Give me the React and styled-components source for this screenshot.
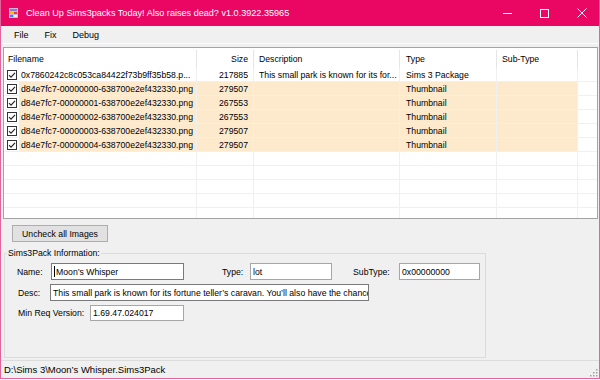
import styled, { createGlobalStyle } from "styled-components";

const GlobalStyle = createGlobalStyle`
  html, body {
    margin: 0;
    padding: 0;
    background: #ffffff;
  }
`;

const Window = styled.div`
  width: 600px;
  height: 379px;
  box-sizing: border-box;
  border: 1px solid #e3639c;
  border-top: none;
  background: #f0f0f0;
  display: flex;
  flex-direction: column;
  font-family: "Liberation Sans", Arial, sans-serif;
  color: #000;
  overflow: hidden;
`;

const TitleBar = styled.div`
  height: 26px;
  margin: 0 -1px;
  background: #ea0663;
  color: #fff;
  display: flex;
  align-items: center;
  padding-left: 9px;
  font-size: 9.1px;
`;

const Title = styled.span`
  margin-left: 8px;
  white-space: nowrap;
`;

const Controls = styled.div`
  margin-left: auto;
  display: flex;
  height: 100%;
`;

const ControlButton = styled.div`
  width: 37px;
  height: 100%;
  display: flex;
  align-items: center;
  justify-content: center;
`;

const MenuBar = styled.div`
  height: 17px;
  display: flex;
  align-items: center;
  padding-left: 5px;
  font-size: 9px;
  border-bottom: 1px solid #fbfbfb;
  margin-bottom: 3px;
`;

const MenuItem = styled.span`
  padding: 0 8px;
`;

const ListView = styled.div`
  margin: 0 1px 0 2px;
  height: 172px;
  box-sizing: border-box;
  border: 1px solid #a3a3a3;
  background: #fff;
  overflow: hidden;
  font-size: 8.7px;
`;

const HeaderRow = styled.div`
  display: flex;
  height: 20px;
`;

const HeaderCell = styled.div`
  width: ${(p) => p.$w}px;
  flex: none;
  box-sizing: border-box;
  border-right: 1px solid #e5e5e5;
  margin: 2px 0 0;
  display: flex;
  align-items: center;
  justify-content: ${(p) => (p.$right ? "flex-end" : "flex-start")};
  padding: 0 ${(p) => (p.$right ? 5 : 0)}px 1px ${(p) => p.$pl ?? 5}px;
`;

const Row = styled.div`
  display: flex;
  height: 14px;
  box-sizing: border-box;
  border-bottom: 1px solid #f0f0f0;
`;

const Cell = styled.div`
  width: ${(p) => p.$w}px;
  flex: none;
  box-sizing: border-box;
  border-right: 1px solid #f0f0f0;
  background: ${(p) => (p.$hl ? "#fdeacd" : "transparent")};
  display: flex;
  align-items: center;
  justify-content: ${(p) => (p.$right ? "flex-end" : "flex-start")};
  padding: 0 ${(p) => (p.$right ? 5 : 0)}px 0 ${(p) => p.$pl ?? 5}px;
  white-space: nowrap;
  overflow: hidden;
`;

const NameText = styled.span`
  flex: 1;
  align-self: stretch;
  display: flex;
  align-items: center;
  margin-left: 2px;
  padding-left: 2px;
  background: ${(p) => (p.$hl ? "#fdeacd" : "transparent")};
  overflow: hidden;
  white-space: nowrap;
`;

const Filler = styled.div`
  flex: 1;
`;

const Body = styled.div`
  flex: 1;
  display: flex;
  flex-direction: column;
  align-items: flex-start;
`;

const Button = styled.button`
  margin: 6px 0 0 11px;
  width: 96px;
  height: 17px;
  padding: 0;
  font-family: "Liberation Sans", Arial, sans-serif;
  font-size: 8.7px;
  color: #000;
  background: #e1e1e1;
  border: 1px solid #adadad;
`;

const GroupBox = styled.fieldset`
  margin: 5px 0 0 3px;
  width: 482px;
  box-sizing: border-box;
  padding: 0 0 36px;
  border: 1px solid #dcdcdc;
  min-width: 0;
`;

const Legend = styled.legend`
  font-size: 8.7px;
  line-height: 12px;
  padding: 0 1px;
  margin-left: 2px;
`;

const FormRow = styled.div`
  display: flex;
  align-items: center;
  margin-top: 4px;
  padding-left: 12px;
  font-size: 8.7px;
`;

const Label = styled.span`
  width: ${(p) => p.$w}px;
  margin-left: ${(p) => p.$ml ?? 0}px;
  flex: none;
  white-space: nowrap;
`;

const TextBox = styled.div`
  width: ${(p) => p.$w}px;
  height: ${(p) => p.$h ?? 17}px;
  flex: none;
  box-sizing: border-box;
  border: 1px solid ${(p) => (p.$focus ? "#2a8ee6" : p.$dark ? "#7a7a7a" : "#a6a6a6")};
  background: #fff;
  display: flex;
  align-items: center;
  padding: 0 2px;
  overflow: hidden;
  white-space: nowrap;
`;

const Caret = styled.span`
  width: 1px;
  height: 11px;
  background: #000;
  margin-right: 1px;
  flex: none;
`;

const StatusBar = styled.div`
  height: 18px;
  box-sizing: border-box;
  border-top: 1px solid #dcdcdc;
  display: flex;
  align-items: center;
  padding-left: 3px;
  font-size: 9.5px;
`;

const Grip = styled.svg`
  margin-left: auto;
  margin-right: 1px;
  align-self: flex-end;
  margin-bottom: 1px;
`;

const COLS = [193, 57, 146, 97, 81];

const rows = [
  {
    name: "0x7860242c8c053ca84422f73b9ff35b58.p...",
    size: "217885",
    desc: "This small park is known for its for...",
    type: "Sims 3 Package",
    hl: false,
  },
  { name: "d84e7fc7-00000000-638700e2ef432330.png", size: "279507", type: "Thumbnail", hl: true },
  { name: "d84e7fc7-00000001-638700e2ef432330.png", size: "267553", type: "Thumbnail", hl: true },
  { name: "d84e7fc7-00000002-638700e2ef432330.png", size: "267553", type: "Thumbnail", hl: true },
  { name: "d84e7fc7-00000003-638700e2ef432330.png", size: "279507", type: "Thumbnail", hl: true },
  { name: "d84e7fc7-00000004-638700e2ef432330.png", size: "279507", type: "Thumbnail", hl: true },
];

function AppIcon() {
  return (
    <svg width="9" height="10" viewBox="0 0 9 10">
      <rect x="0" y="0" width="9" height="10" fill="#c9b6e4" />
      <rect x="1" y="1" width="7" height="2" fill="#8f7bc0" />
      <rect x="1" y="4" width="3" height="2" fill="#f2c20f" />
      <rect x="5" y="4" width="3" height="2" fill="#e23b3b" />
      <rect x="1" y="7" width="3" height="2" fill="#2f8ae8" />
      <rect x="5" y="7" width="3" height="2" fill="#f4efe2" />
    </svg>
  );
}

function CheckBox() {
  return (
    <svg width="10" height="10" viewBox="0 0 10 10" style={{ flex: "none" }}>
      <rect x="0.5" y="0.5" width="9" height="9" fill="#fff" stroke="#333" />
      <path d="M2 5.2 L4 7.2 L8 2.8" fill="none" stroke="#222" strokeWidth="1.1" />
    </svg>
  );
}

function ListRow({ r }) {
  return (
    <Row>
      <Cell $w={COLS[0]} $pl={3}>
        <CheckBox />
        <NameText $hl={r.hl}>{r.name}</NameText>
      </Cell>
      <Cell $w={COLS[1]} $hl={r.hl} $right>
        {r.size}
      </Cell>
      <Cell $w={COLS[2]} $hl={r.hl}>
        {r.desc}
      </Cell>
      <Cell $w={COLS[3]} $hl={r.hl} $pl={6}>
        {r.type}
      </Cell>
      <Cell $w={COLS[4]} $hl={r.hl} />
      <Filler />
    </Row>
  );
}

function EmptyRow() {
  return (
    <Row>
      {COLS.map((w, i) => (
        <Cell key={i} $w={w} />
      ))}
      <Filler />
    </Row>
  );
}

export default function App() {
  return (
    <>
      <GlobalStyle />
      <Window>
        <TitleBar>
          <AppIcon />
          <Title>Clean Up Sims3packs Today! Also raises dead? v1.0.3922.35965</Title>
          <Controls>
            <ControlButton>
              <svg width="9" height="9" viewBox="0 0 9 9">
                <line x1="0" y1="4.5" x2="9" y2="4.5" stroke="#fff" />
              </svg>
            </ControlButton>
            <ControlButton>
              <svg width="9" height="9" viewBox="0 0 9 9">
                <rect x="0.5" y="0.5" width="8" height="8" fill="none" stroke="#fff" />
              </svg>
            </ControlButton>
            <ControlButton>
              <svg width="10" height="10" viewBox="0 0 10 10">
                <path d="M0.5 0.5 L9.5 9.5 M9.5 0.5 L0.5 9.5" stroke="#fff" strokeWidth="1" />
              </svg>
            </ControlButton>
          </Controls>
        </TitleBar>
        <MenuBar>
          <MenuItem>File</MenuItem>
          <MenuItem>Fix</MenuItem>
          <MenuItem>Debug</MenuItem>
        </MenuBar>
        <ListView>
          <HeaderRow>
            <HeaderCell $w={COLS[0]} $pl={4}>Filename</HeaderCell>
            <HeaderCell $w={COLS[1]} $right>Size</HeaderCell>
            <HeaderCell $w={COLS[2]}>Description</HeaderCell>
            <HeaderCell $w={COLS[3]} $pl={6}>Type</HeaderCell>
            <HeaderCell $w={COLS[4]}>Sub-Type</HeaderCell>
            <Filler />
          </HeaderRow>
          {rows.map((r, i) => (
            <ListRow key={i} r={r} />
          ))}
          {[0, 1, 2, 3, 4].map((i) => (
            <EmptyRow key={i} />
          ))}
        </ListView>
        <Body>
          <Button>Uncheck all Images</Button>
          <GroupBox>
            <Legend>Sims3Pack Information:</Legend>
            <FormRow>
              <Label $w={34}>Name:</Label>
              <TextBox $w={133} $focus>
                <Caret />
                Moon’s Whisper
              </TextBox>
              <Label $w={28} $ml={38}>Type:</Label>
              <TextBox $w={82}>lot</TextBox>
              <Label $w={46} $ml={21}>SubType:</Label>
              <TextBox $w={81}>0x00000000</TextBox>
            </FormRow>
            <FormRow>
              <Label $w={32} $ml={1}>Desc:</Label>
              <TextBox $w={319} $dark>
                This small park is known for its fortune teller’s caravan. You’ll also have the chance
              </TextBox>
            </FormRow>
            <FormRow>
              <Label $w={72} $ml={1}>Min Req Version:</Label>
              <TextBox $w={94} $h={16}>1.69.47.024017</TextBox>
            </FormRow>
          </GroupBox>
        </Body>
        <StatusBar>
          D:\Sims 3\Moon’s Whisper.Sims3Pack
          <Grip width="10" height="10" viewBox="0 0 10 10">
            {[
              [8, 2],
              [5, 5],
              [8, 5],
              [2, 8],
              [5, 8],
              [8, 8],
            ].map(([x, y], i) => (
              <rect key={i} x={x} y={y} width="1.5" height="1.5" fill="#a0a0a0" />
            ))}
          </Grip>
        </StatusBar>
      </Window>
    </>
  );
}
